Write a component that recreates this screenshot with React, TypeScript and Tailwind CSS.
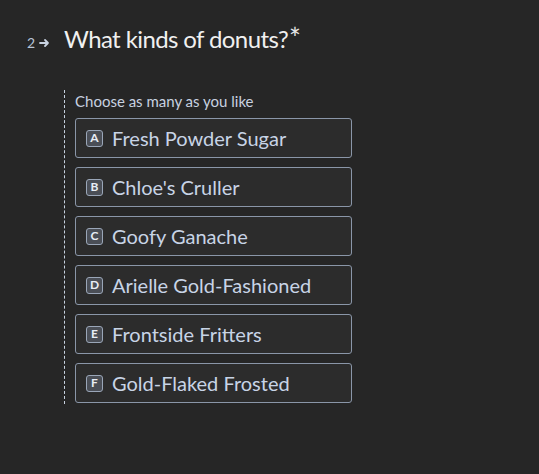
const options = [
  { key: "A", label: "Fresh Powder Sugar" },
  { key: "B", label: "Chloe's Cruller" },
  { key: "C", label: "Goofy Ganache" },
  { key: "D", label: "Arielle Gold-Fashioned" },
  { key: "E", label: "Frontside Fritters" },
  { key: "F", label: "Gold-Flaked Frosted" },
];

export default function App() {
  return (
    <div
      className="w-[539px] h-[474px] bg-[#262626] text-white pt-[24px] pl-[27px]"
      style={{ fontFamily: "Lato, 'Noto Sans', sans-serif" }}
    >
      <div className="flex items-start">
        <div className="flex items-center gap-[4px] mt-[8px] text-[14px] text-[#b8c4d6] w-[37px]">
          <span>2</span>
          <svg width="11" height="10" viewBox="0 0 11 10" fill="none">
            <path d="M1 5h8M6 2l3 3-3 3" stroke="#c8d2e0" strokeWidth="1.8" strokeLinecap="round" strokeLinejoin="round" />
          </svg>
        </div>
        <h1 className="text-[24px] leading-[30px] tracking-[-0.6px] font-normal text-[#f0f0f0]">
          What kinds of donuts?
          <span className="relative top-[1px] ml-[1px] text-[28px] leading-[0] text-[#e6e6e6]">*</span>
        </h1>
      </div>

      <div className="ml-[37px] mt-[36px] border-l border-dashed border-[#c8d2e0] pl-[10px] pt-[2px] pb-[1px] w-[288px]">
        <p className="text-[15px] leading-[18px] text-[#c8d2e0] mb-[8px]">Choose as many as you like</p>
        <div className="flex flex-col gap-[9px]">
          {options.map((o) => (
            <div
              key={o.key}
              className="flex items-center h-[40px] w-[277px] rounded-[3px] border border-[#8a96a8] bg-[#2c2c2c] pl-[10px]"
            >
              <span className="flex items-center justify-center w-[17px] h-[17px] rounded-[3px] border border-[#9aa6b8] bg-[#4a4e56] text-[12px] font-bold text-[#e8edf5]">
                {o.key}
              </span>
              <span className="ml-[9px] text-[20px] text-[#c8d4e6]">{o.label}</span>
            </div>
          ))}
        </div>
      </div>
    </div>
  );
}
